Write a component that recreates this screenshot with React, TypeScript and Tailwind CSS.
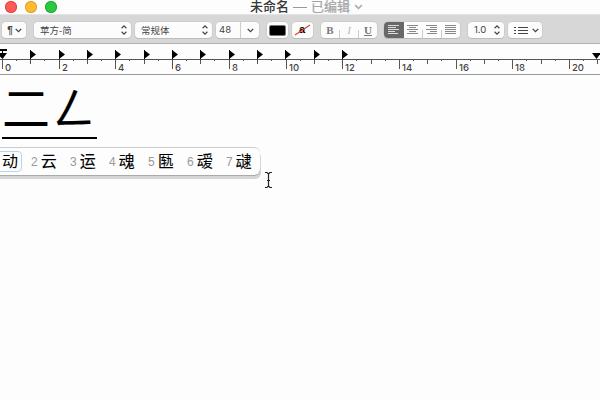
import React from "react";

const cjk = "font-['Liberation_Sans','Noto_Sans_CJK_SC',sans-serif]";
const button = "flex h-4 shrink-0 items-center rounded-[4px] bg-[#fcfcfc] shadow-[0_0_0_0.5px_#c4c4c4,0_1px_0_#b4b4b4]";
const tabs = [30, 59, 87, 115, 144, 172, 200, 229, 257, 285, 314, 342];
const numbers = [0, 2, 4, 6, 8, 10, 12, 14, 16, 18, 20];
const candidates = ["云", "运", "魂", "匦", "叆", "叇"];

function Chevron({ color = "#444", wide = false }: { color?: string; wide?: boolean }) {
  return (
    <svg width={wide ? 9 : 7} height={wide ? 6 : 5} viewBox="0 0 7 5" fill="none" stroke={color} strokeWidth="1.3">
      <path d="M.7 .9 3.5 3.7 6.3 .9" />
    </svg>
  );
}

function Stepper() {
  return (
    <svg width="6" height="10" viewBox="0 0 6 10" fill="none" stroke="#444" strokeWidth="1.2">
      <path d="M.6 3.2 3 .9 5.4 3.2M.6 6.8 3 9.1 5.4 6.8" />
    </svg>
  );
}

function AlignIcon({ rows, color }: { rows: number[][]; color: string }) {
  return (
    <svg width="12" height="10" viewBox="0 0 12 10" stroke={color}>
      {rows.map(([a, b], i) => (
        <path key={i} d={`M${a} ${0.5 + i * 2}H${b}`} />
      ))}
    </svg>
  );
}

function Ruler() {
  return (
    <svg className="block h-[31px] w-[600px] shrink-0 bg-[#fdfdfd]" viewBox="0 44 600 31">
      <path d="M0 59.5H600" stroke="#555" />
      <path d="M0 74.5H600" stroke="#999" />
      {Array.from({ length: 22 }, (_, i) => {
        const x = Math.round(2 + i * 28.35) + 0.5;
        return (
          <g key={i} stroke="#555">
            <path d={`M${x} 59V${i % 2 ? 64 : 69}`} />
            <path d={`M${x + 14} 60V61`} />
          </g>
        );
      })}
      {tabs.map((x) => (
        <g key={x}>
          <path d={`M${x}.5 50V60`} stroke="#333" />
          <path d={`M${x} 50V59L${x + 6} 54.5Z`} />
        </g>
      ))}
      <path d="M0 49H7V51H0ZM2 51H3V53H2ZM0 53H7L2.5 59 0 56.5Z" />
      <path d="M592 53H601L596.5 59Z" />
      {numbers.map((n) => (
        <text key={n} x={Math.round(5 + n * 28.35)} y="71" fontSize="9.5" fontWeight="500" fill="#444" fontFamily="Inter, sans-serif">
          {n}
        </text>
      ))}
    </svg>
  );
}

export default function App() {
  return (
    <div className={`relative flex h-[400px] w-[600px] flex-col overflow-hidden bg-[#fdfdfd] text-black ${cjk}`}>
      <header className="relative flex h-[14px] shrink-0 items-center justify-center bg-[#fdfdfd] pl-[13px] text-[13px] leading-[14px]">
        <div className="absolute left-[5px] top-px flex gap-2">
          <i className="size-3 rounded-full bg-[#fc5b57] shadow-[inset_0_0_0_1px_#df4744]" />
          <i className="size-3 rounded-full bg-[#fdbc30] shadow-[inset_0_0_0_1px_#dea034]" />
          <i className="size-3 rounded-full bg-[#28c940] shadow-[inset_0_0_0_1px_#27aa35]" />
        </div>
        <span className="font-medium text-[#383838]">未命名</span>
        <span className="mx-1 mt-px h-px w-[14px] bg-[#999]" />
        <span className="mr-1 text-[#a5a5a5] [-webkit-text-stroke:0.25px_#a5a5a5]">已编辑</span>
        <Chevron color="#aaa" wide />
      </header>

      <div className="flex h-[30px] shrink-0 items-center border-b border-t border-b-[#b1b1b1] border-t-[#e4e4e4] bg-[#d7d7d7] pb-px pl-[2px] pt-[3px] text-[9.5px] text-[#444]">
        <div className={`${button} w-6 justify-center gap-[2px] pl-px`}>
          <span className="text-[10px] font-bold">¶</span>
          <Chevron />
        </div>
        <div className={`${button} ml-2 w-[97px] justify-between pl-[6px] pr-1`}>
          <span className="pt-[2px]">苹方-简</span>
          <Stepper />
        </div>
        <div className={`${button} ml-1 w-[77px] justify-between pl-[6px] pr-1`}>
          <span className="pt-[2px]">常规体</span>
          <Stepper />
        </div>
        <div className={`${button} ml-1 w-[43px]`}>
          <span className="w-6 pl-[3px] pt-px font-[Inter]">48</span>
          <span className="h-4 w-px bg-[#ccc]" />
          <span className="flex flex-1 justify-center"><Chevron /></span>
        </div>
        <div className={`${button} ml-2 w-[21px] justify-center`}>
          <span className="h-[11px] w-[17px] rounded-[2px] border border-[#777] bg-black" />
        </div>
        <div className={`${button} ml-1 w-[21px] justify-center`}>
          <svg width="19" height="14" viewBox="0 0 19 14">
            <text x="6" y="10" fontFamily="Liberation Sans, sans-serif" fontSize="11" fontWeight="bold">a</text>
            <path d="M2 12 17 2" stroke="#e63b37" strokeWidth="1.2" />
          </svg>
        </div>
        <div className={`${button} ml-2 w-14 font-['Liberation_Serif',serif] text-[11px] text-[#777]`}>
          <span className="flex-1 text-center font-bold">B</span>
          <span className="mt-2 h-2 w-px bg-[#ccc]" />
          <span className="flex-1 text-center italic text-[#bbb]">I</span>
          <span className="mt-2 h-2 w-px bg-[#ccc]" />
          <span className="flex-1 text-center font-bold underline">U</span>
        </div>
        <div className={`${button} ml-[7px] w-[76px] overflow-hidden`}>
          <span className="flex h-4 w-5 items-center justify-center bg-[#686868]">
            <AlignIcon color="#ddd" rows={[[0, 11], [0, 8], [0, 11], [0, 7], [0, 10]]} />
          </span>
          <span className="flex flex-1 justify-center"><AlignIcon color="#888" rows={[[0, 11], [2, 9], [0, 11], [2, 9], [0, 11]]} /></span>
          <span className="mt-2 h-2 w-px bg-[#ccc]" />
          <span className="flex flex-1 justify-center"><AlignIcon color="#888" rows={[[0, 11], [4, 11], [0, 11], [4, 11], [1, 11]]} /></span>
          <span className="mt-2 h-2 w-px bg-[#ccc]" />
          <span className="flex flex-1 justify-center"><AlignIcon color="#888" rows={[[0, 11], [0, 11], [0, 11], [0, 11], [0, 11]]} /></span>
        </div>
        <div className={`${button} ml-2 w-[36px] justify-between pl-[6px] pr-1`}>
          <span className="pt-px font-[Inter]">1.0</span>
          <Stepper />
        </div>
        <div className={`${button} ml-1 w-[34px] justify-between pl-[6px] pr-[3px]`}>
          <svg width="14" height="9" viewBox="0 0 14 9" stroke="#444">
            <path d="M4 1.5H14M4 4.5H14M4 7.5H14M0 1.5H2M0 4.5H2M0 7.5H2" />
          </svg>
          <Chevron />
        </div>
      </div>

      <Ruler />

      <main className="relative flex-1 bg-[#fdfdfd]">
        <p className="ml-[2px] flex h-[64px] w-[95px] whitespace-nowrap border-b-2 border-black font-['Noto_Sans_CJK_SC',sans-serif] text-[48px] leading-[60px]">
          <span className="w-[50px]">二</span>
          <span className="text-[43px] leading-[61px] [-webkit-text-stroke:0.3px_black]">ㄥ</span>
        </p>
        <div className="absolute left-[-6px] top-[72px] flex h-7 w-[266px] items-center rounded-[6px] border-t border-[#ccc] bg-[#fdfdfd] shadow-[0_1px_0_#aaa,1px_4px_0_0_#d5d5d5]">
          <span className="flex h-[21px] w-7 items-center justify-end rounded-[4px] border border-[#b4d5ef] pr-[3px] text-base">动</span>
          {candidates.map((c, i) => (
            <span key={i} className="ml-[9px] flex w-[30px] items-center gap-[3px]">
              <span className="text-xs text-[#999]">{i + 2}</span>
              <span className="text-base [-webkit-text-stroke:0.1px_black]">{c}</span>
            </span>
          ))}
        </div>
        <svg className="absolute left-[264px] top-[97px]" width="9" height="17" viewBox="0 0 9 17" fill="none" stroke="#222" strokeWidth="1.2">
          <path d="M1 .5H3L4.5 2 6 .5H8M4.5 2V14M1 15.5H3L4.5 14 6 15.5H8M3 8.5H6" />
        </svg>
      </main>
    </div>
  );
}
